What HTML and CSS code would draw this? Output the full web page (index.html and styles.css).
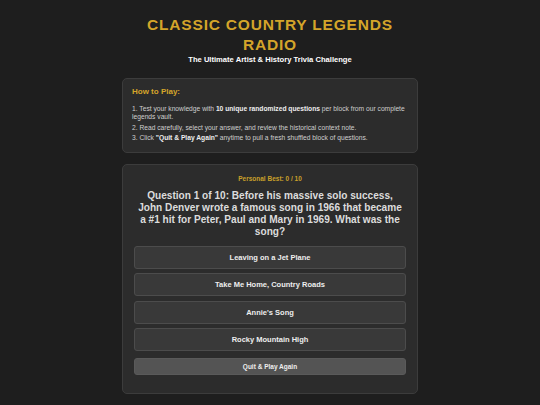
FILE: index.html
```html
<!DOCTYPE html>
<html>
<head>
<meta charset="utf-8">
<link rel="stylesheet" href="styles.css">
</head>
<body>
<div class="page">
  <header class="header">
    <h1 class="title">CLASSIC COUNTRY LEGENDS RADIO</h1>
    <p class="subtitle">The Ultimate Artist &amp; History Trivia Challenge</p>
  </header>
  <section class="card howto">
    <h2 class="howto-title">How to Play:</h2>
    <p class="step">1. Test your knowledge with <b>10 unique randomized questions</b> per block from our complete legends vault.</p>
    <p class="step">2. Read carefully, select your answer, and review the historical context note.</p>
    <p class="step">3. Click <b>"Quit &amp; Play Again"</b> anytime to pull a fresh shuffled block of questions.</p>
  </section>
  <section class="card quiz">
    <div class="best">Personal Best: 0 / 10</div>
    <div class="question">Question 1 of 10: Before his massive solo success, John Denver wrote a famous song in 1966 that became a #1 hit for Peter, Paul and Mary in 1969. What was the song?</div>
    <div class="options">
      <button class="option">Leaving on a Jet Plane</button>
      <button class="option">Take Me Home, Country Roads</button>
      <button class="option">Annie's Song</button>
      <button class="option">Rocky Mountain High</button>
    </div>
    <button class="quit">Quit &amp; Play Again</button>
  </section>
</div>
</body>
</html>
```
FILE: styles.css
```css
* { box-sizing: border-box; }
html, body { margin: 0; padding: 0; }
body {
  background: #1e1e1e;
  font-family: "Liberation Sans", Arial, sans-serif;
  color: #e0e0e0;
}
.page {
  width: 296px;
  margin: 0 auto;
  padding-top: 15px;
}
.header { text-align: center; }
.title {
  margin: 0;
  font-size: 15.5px;
  line-height: 20px;
  font-weight: bold;
  letter-spacing: 0.8px;
  color: #d4a52a;
}
.subtitle {
  margin: 0;
  font-size: 7.6px;
  line-height: 10px;
  font-weight: bold;
  color: #ffffff;
}
.card {
  background: #2c2c2c;
  border: 1px solid #3c3c3c;
  border-radius: 5px;
}
.howto {
  margin-top: 13px;
  padding: 8px 9px 7px;
}
.howto-title {
  margin: 0 0 8px;
  font-size: 8px;
  line-height: 10px;
  font-weight: bold;
  color: #d4a52a;
}
.step {
  margin: 0 0 2.5px;
  font-size: 6.7px;
  line-height: 8px;
  color: #cfcfcf;
}
.step b { color: #eeeeee; }
.quiz {
  margin-top: 11px;
  padding: 10px 11px 18px;
  text-align: center;
}
.best {
  font-size: 6.5px;
  line-height: 8px;
  font-weight: bold;
  color: #c9a02a;
}
.question {
  margin-top: 7px;
  font-size: 10.1px;
  line-height: 12.3px;
  font-weight: bold;
  color: #dcdcdc;
}
.options {
  margin-top: 7px;
  display: flex;
  flex-direction: column;
  gap: 4.5px;
}
.option, .quit {
  display: block;
  width: 100%;
  font-family: inherit;
  font-weight: bold;
  border-radius: 3px;
  cursor: pointer;
}
.option {
  height: 23px;
  background: #393939;
  border: 1px solid #4c4c4c;
  color: #eeeeee;
  font-size: 7.5px;
}
.quit {
  margin-top: 7px;
  height: 17px;
  background: #545454;
  border: 1px solid #5a5a5a;
  color: #eeeeee;
  font-size: 6.5px;
}
```
